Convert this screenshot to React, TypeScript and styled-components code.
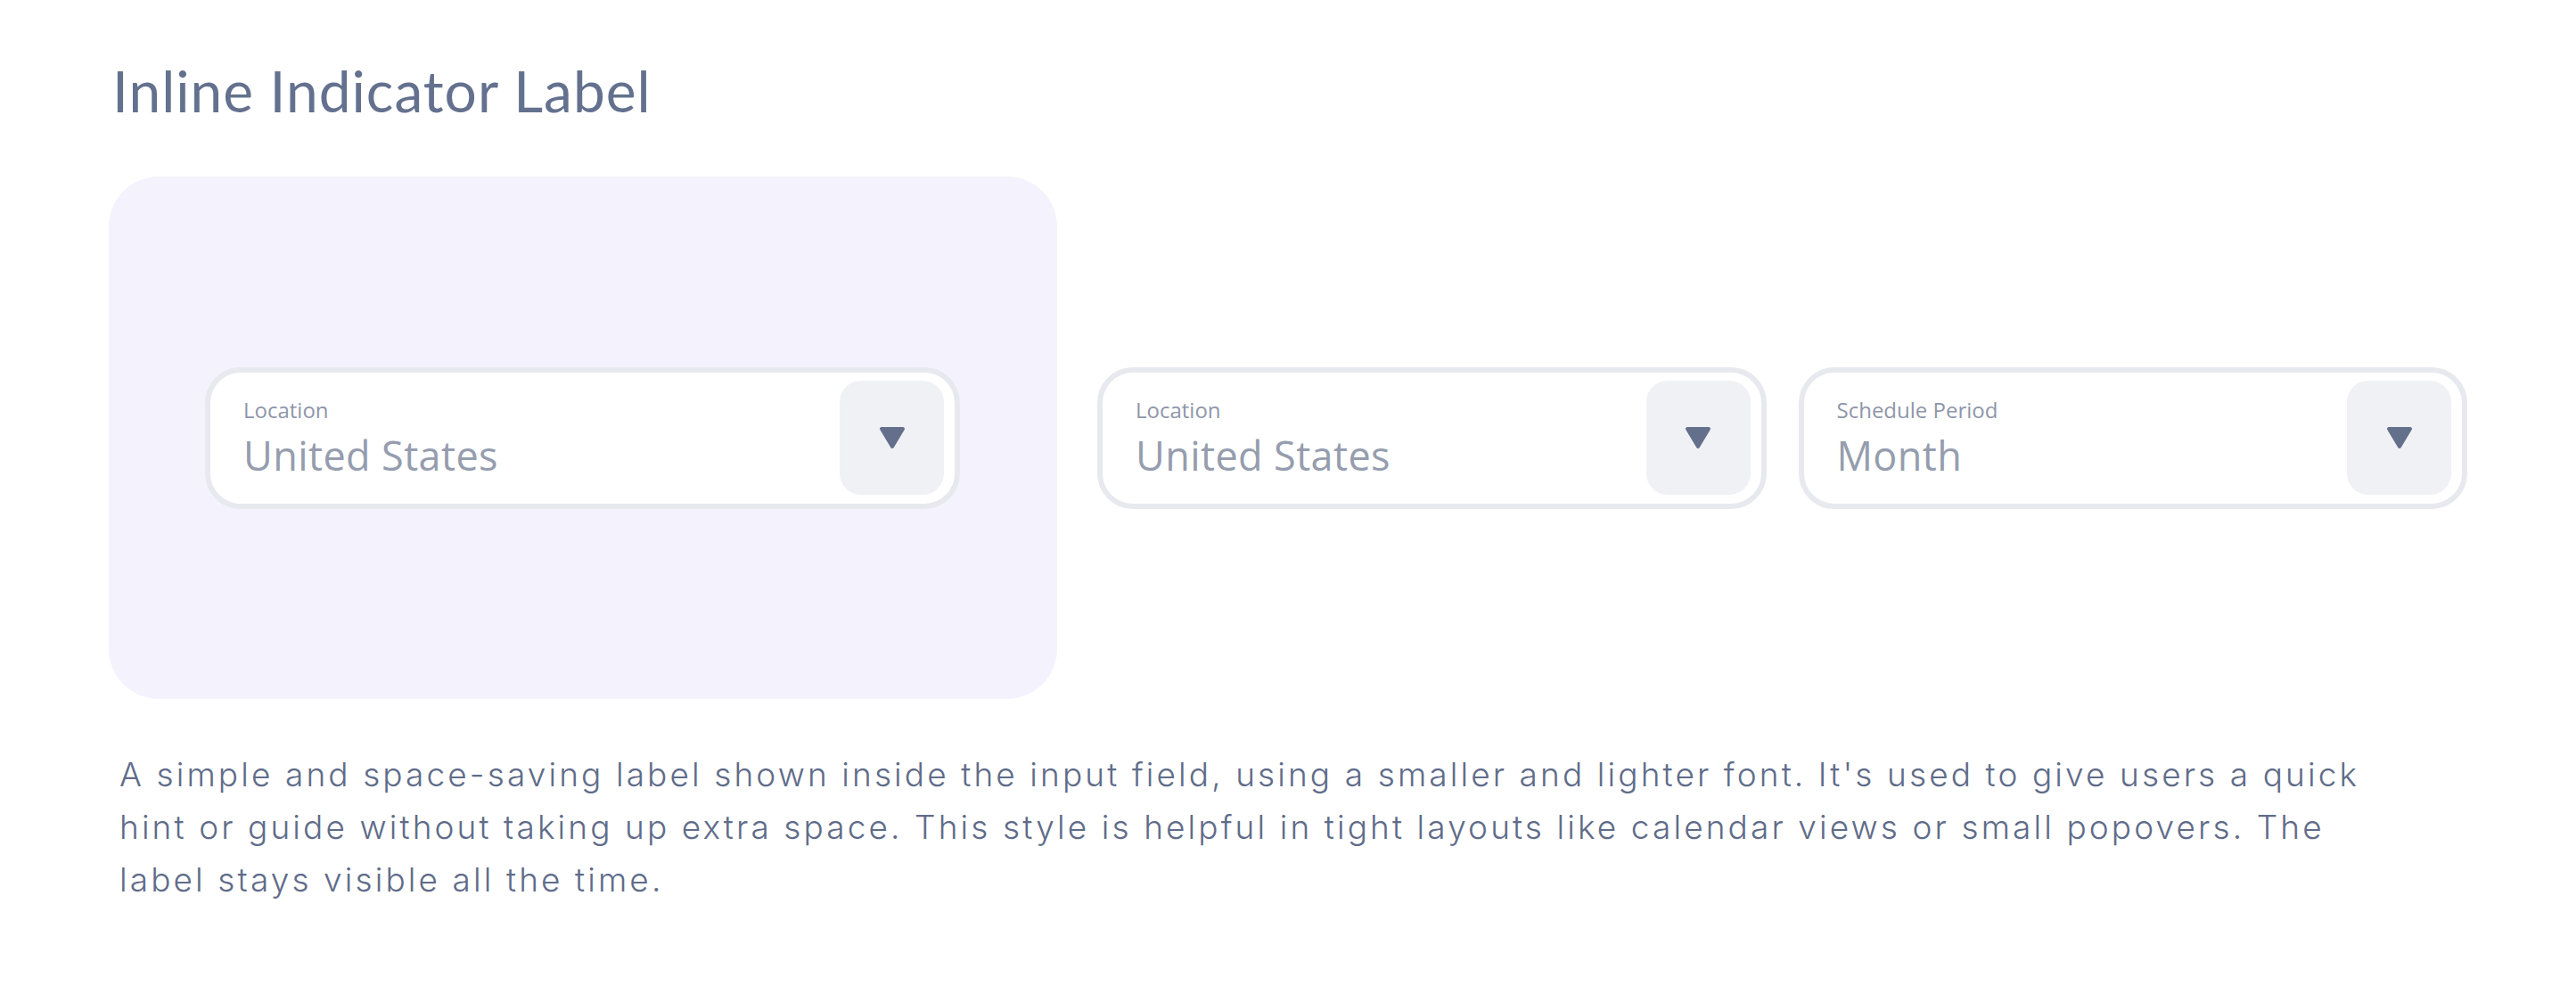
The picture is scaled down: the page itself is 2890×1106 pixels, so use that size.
import React from "react";
import styled, { createGlobalStyle } from "styled-components";

const GlobalStyle = createGlobalStyle`
  html, body {
    margin: 0;
    padding: 0;
    background: #ffffff;
  }
  * { box-sizing: border-box; }
`;

const Page = styled.div`
  padding: 62px 122px 40px 122px;
  font-family: "Open Sans", "Lato", sans-serif;
`;

const Title = styled.h1`
  margin: 0 0 0 4px;
  font-family: "Lato", "Noto Sans", sans-serif;
  font-weight: 400;
  font-size: 64px;
  line-height: 80px;
  letter-spacing: 1px;
  color: #64718e;
`;

const Row = styled.div`
  display: flex;
  align-items: center;
  margin-top: 56px;
`;

const Panel = styled.div`
  width: 1064px;
  height: 586px;
  flex: none;
  background: #f4f3fd;
  border-radius: 56px;
  display: flex;
  align-items: center;
  justify-content: center;
  padding: 0 109px 0 108px;
`;

const FieldsGroup = styled.div`
  flex: 1;
  display: flex;
  gap: 36px;
  margin-left: 45px;
`;

const Field = styled.div<{ $grow?: boolean }>`
  flex: 1;
  width: ${(p) => (p.$grow ? "100%" : "auto")};
  height: 159px;
  border: 6px solid #e8e9ef;
  border-radius: 40px;
  background: #ffffff;
  display: flex;
  align-items: center;
  padding: 0 12px 0 37px;
`;

const TextCol = styled.div`
  flex: 1;
  display: flex;
  flex-direction: column;
  justify-content: center;
`;

const Label = styled.span`
  font-family: "Open Sans", "Lato", sans-serif;
  font-size: 24px;
  line-height: 30px;
  color: #8e96a9;
  font-weight: 400;
`;

const Value = styled.span`
  font-family: "Open Sans", "Lato", sans-serif;
  font-size: 45px;
  line-height: 54px;
  letter-spacing: 0.4px;
  color: #959dae;
  font-weight: 400;
  margin-top: 9px;
`;

const ArrowButton = styled.div`
  width: 117px;
  height: 128px;
  flex: none;
  border-radius: 24px;
  background: #f0f1f5;
  display: flex;
  align-items: center;
  justify-content: center;
`;

const Description = styled.p`
  margin: 55px 0 0 12px;
  font-family: "Inter", "Lato", sans-serif;
  font-weight: 300;
  font-size: 37px;
  line-height: 59px;
  letter-spacing: 3.1px;
  color: #5f6c89;
  white-space: nowrap;
`;

const Triangle = () => (
  <svg width="30" height="26" viewBox="0 0 30 26">
    <path
      d="M3 3 L27 3 L15 23 Z"
      fill="#64708b"
      stroke="#64708b"
      strokeWidth="4"
      strokeLinejoin="round"
    />
  </svg>
);

const Select = ({ label, value, grow }: { label: string; value: string; grow?: boolean }) => (
  <Field $grow={grow}>
    <TextCol>
      <Label>{label}</Label>
      <Value>{value}</Value>
    </TextCol>
    <ArrowButton>
      <Triangle />
    </ArrowButton>
  </Field>
);

export default function App() {
  return (
    <Page>
      <GlobalStyle />
      <Title>Inline Indicator Label</Title>
      <Row>
        <Panel>
          <Select label="Location" value="United States" grow />
        </Panel>
        <FieldsGroup>
          <Select label="Location" value="United States" />
          <Select label="Schedule Period" value="Month" />
        </FieldsGroup>
      </Row>
      <Description>
        A simple and space-saving label shown inside the input field, using a smaller and lighter font. It's used to give users a quick
        <br />
        hint or guide without taking up extra space. This style is helpful in tight layouts like calendar views or small popovers. The
        <br />
        label stays visible all the time.
      </Description>
    </Page>
  );
}
